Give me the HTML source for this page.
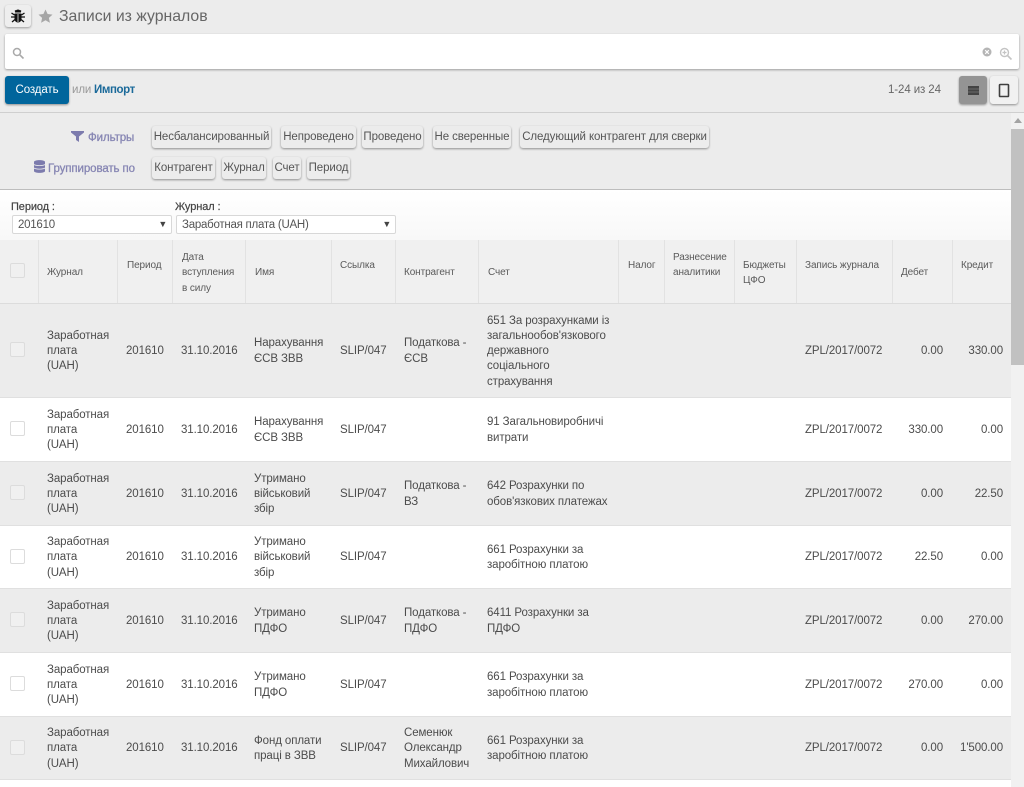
<!DOCTYPE html>
<html lang="ru"><head><meta charset="utf-8"><title>Записи из журналов</title>
<style>
html,body{margin:0;padding:0;width:1024px;height:787px;overflow:hidden;background:#fff;font-family:"Liberation Sans","DejaVu Sans",sans-serif;font-size:11.5px;letter-spacing:-.1px;color:#4c4c4c}
div,span,svg{position:absolute;box-sizing:border-box;white-space:nowrap}
table span,table div{position:static}
.btn{background:#ececec;border-radius:3px;box-shadow:0 1px 2px rgba(0,0,0,.4);height:22px;line-height:23px;text-align:center;font-size:11.5px;color:#555}
.lbl{color:#7c7bad;font-size:11.5px;opacity:.9;font-weight:normal;-webkit-text-stroke:.3px #7c7bad;line-height:15px}
.h{font-size:10px;color:#5a5a5a;line-height:15.3px}
.vl{width:1px;background:#e2e2e2;top:240px;height:63px}
.sel{top:215px;height:19px;background:#fff;border:1px solid #d8d8d8;border-radius:2px;line-height:19px;padding-left:5px;font-size:11.5px;letter-spacing:-.25px;color:#555}
.sel i{position:absolute;right:4px;top:-1px;font-style:normal;font-size:9px;color:#444}
.cb{display:inline-block;width:15px;height:15px;border:1px solid #dcdcdc;border-radius:2px;background:#f0f0f0;vertical-align:middle}
table .cb{position:relative;top:0}
table{position:absolute;left:0;top:304px;width:1011px;border-collapse:collapse;table-layout:fixed;font-size:11.5px;line-height:15.3px;color:#4c4c4c}
td{padding:3px 8px 0 9px;vertical-align:middle;border-bottom:1px solid #e0e0e0;overflow:hidden}
tr.g td{background:#ececec}
td.c{padding:0 0 0 10px}
td.r{text-align:right;padding-right:9px;padding-left:0}
td.r2{text-align:right;padding-right:8px;padding-left:0}
td.n{white-space:nowrap}
td.s{padding-right:4px}
</style></head>
<body>
<div style="left:0;top:0;width:1024px;height:113px;background:#ececec;border-bottom:1px solid #cfcfcf"></div>
<div style="left:5px;top:5px;width:26px;height:22px;background:#eee;border-radius:3px;box-shadow:0 1px 2px rgba(0,0,0,.35)"></div>
<svg style="left:10px;top:8px" width="16" height="16" viewBox="0 0 16 16"><path d="M5 4.500a3 3 0 0 1 6 0zM4.500 5.500h7V11a3.500 3.500 0 0 1-7 0z" fill="#111"/><path d="M5 2.500l1.500 1.500M11 2.500L9.500 4M1.500 5l3 2M14.500 5l-3 2M1 9h3.500M15 9h-3.500M2 14l3-2.500M14 14l-3-2.500" stroke="#111" stroke-width="1.300" fill="none"/><path d="M8 6v8" stroke="#ececec" stroke-width=".8"/></svg>
<svg style="left:38px;top:9px" width="15" height="14" viewBox="0 0 15 14"><path d="M7.500 .5l2.100 4.500 4.900.6-3.600 3.300 1 4.800-4.400-2.400-4.400 2.400 1-4.800L.5 5.600l4.900-.6z" fill="#a6a6a6"/></svg>
<div style="left:59px;top:8px;font-size:15.800px;letter-spacing:0;line-height:18px;color:#666">Записи из журналов</div>

<div style="left:5px;top:34px;width:1014px;height:35px;background:#fff;border-radius:2px;box-shadow:0 1px 2px rgba(0,0,0,.35)"></div>
<svg style="left:12px;top:47px" width="13" height="13" viewBox="0 0 13 13"><circle cx="5" cy="5" r="3.500" fill="none" stroke="#a9a9a9" stroke-width="1.500"/><path d="M7.800 7.800l3.700 3.700" stroke="#a9a9a9" stroke-width="1.600"/></svg>
<svg style="left:982px;top:47px" width="10" height="10" viewBox="0 0 10 10"><circle cx="5" cy="5" r="4.500" fill="#b5b5b5"/><path d="M3.200 3.200l3.600 3.600M6.800 3.200L3.200 6.800" stroke="#fff" stroke-width="1.100"/></svg>
<svg style="left:999px;top:47px" width="14" height="14" viewBox="0 0 14 14"><circle cx="5.500" cy="5.500" r="4" fill="none" stroke="#c4c4c4" stroke-width="1.400"/><path d="M8.500 8.500l4 4" stroke="#c4c4c4" stroke-width="1.600"/><path d="M3.500 5.500h4M5.500 3.500v4" stroke="#c4c4c4" stroke-width="1.200"/></svg>

<div style="left:5px;top:76px;width:64px;height:28px;background:#00659c;border-radius:3px;box-shadow:0 1px 2px rgba(0,0,0,.4);color:#fff;text-align:center;line-height:29px;font-size:11.5px;">Создать</div>
<div style="left:72px;top:83px;font-size:11.5px;line-height:15px;color:#999">или</div>
<div style="left:94px;top:83px;font-size:11.5px;line-height:15px;color:#1b6a9a;font-weight:bold;letter-spacing:-.4px">Импорт</div>
<div style="left:888px;top:83px;font-size:11.5px;line-height:15px;color:#666">1-24 из 24</div>
<div style="left:959px;top:76px;width:28px;height:28px;background:#949494;border-radius:3px;box-shadow:0 1px 2px rgba(0,0,0,.4)"></div>
<svg style="left:968px;top:86px" width="11" height="9" viewBox="0 0 11 9"><path d="M0 0h11v9H0z" fill="#444"/><path d="M0 3h11M0 6h11" stroke="#777" stroke-width=".7"/></svg>
<div style="left:990px;top:76px;width:28px;height:28px;background:#f1f1f1;border-radius:3px;box-shadow:0 1px 2px rgba(0,0,0,.4)"></div>
<svg style="left:998px;top:83px" width="12" height="15" viewBox="0 0 12 15"><rect x="1.500" y="1.500" width="9" height="12" rx=".8" fill="none" stroke="#3f3f3f" stroke-width="1.600"/></svg>

<div style="left:0;top:113px;width:1011px;height:77px;background:#ececec;border-bottom:1px solid #bdbdbd"></div>
<svg style="left:71px;top:131px" width="13" height="11" viewBox="0 0 13 11"><path d="M0 0h13v1.500L8 5.500V11L5 9V5.500L0 1.500z" fill="#7c7bad"/></svg>
<div class="lbl" style="left:88px;top:131px">Фильтры</div>
<svg style="left:34px;top:160px" width="11" height="13" viewBox="0 0 11 13"><path d="M0 2c0-2.500 11-2.500 11 0v9c0 2.500-11 2.500-11 0z" fill="#7c7bad"/><path d="M0 4.500c2 1.500 9 1.500 11 0M0 8c2 1.500 9 1.500 11 0" stroke="#ececec" stroke-width=".8" fill="none"/></svg>
<div class="lbl" style="left:48px;top:162px">Группировать по</div>
<div class="btn" style="left:152px;top:126px;width:119px">Несбалансированный</div>
<div class="btn" style="left:281px;top:126px;width:75px">Непроведено</div>
<div class="btn" style="left:362px;top:126px;width:61px">Проведено</div>
<div class="btn" style="left:433px;top:126px;width:78px">Не сверенные</div>
<div class="btn" style="left:520px;top:126px;width:189px">Следующий контрагент для сверки</div>
<div class="btn" style="left:152px;top:157px;width:63px">Контрагент</div>
<div class="btn" style="left:222px;top:157px;width:44px">Журнал</div>
<div class="btn" style="left:273px;top:157px;width:28px">Счет</div>
<div class="btn" style="left:307px;top:157px;width:43px">Период</div>

<div style="left:0;top:190px;width:1011px;height:50px;background:linear-gradient(#fff,#f8f8f8)"></div>
<div style="left:11px;top:200px;font-size:11px;line-height:14px;color:#444;-webkit-text-stroke:.2px #444">Период :</div>
<div style="left:175px;top:200px;font-size:11px;line-height:14px;color:#444;-webkit-text-stroke:.2px #444">Журнал :</div>
<div class="sel" style="left:12px;width:160px">201610<i>▼</i></div>
<div class="sel" style="left:176px;width:220px">Заработная плата (UAH)<i>▼</i></div>

<div style="left:0;top:240px;width:1011px;height:64px;background:#f0f0f0;border-bottom:1px solid #dcdcdc"></div>
<div class="vl" style="left:38px"></div><div class="vl" style="left:117px"></div><div class="vl" style="left:172px"></div><div class="vl" style="left:245px"></div><div class="vl" style="left:331px"></div><div class="vl" style="left:395px"></div><div class="vl" style="left:478px"></div><div class="vl" style="left:618px"></div><div class="vl" style="left:664px"></div><div class="vl" style="left:734px"></div><div class="vl" style="left:796px"></div><div class="vl" style="left:892px"></div><div class="vl" style="left:952px"></div>
<div class="cb" style="position:absolute;left:10px;top:263px"></div>
<div class="h" style="left:47px;top:265px">Журнал</div>
<div class="h" style="left:127px;top:258px">Период</div>
<div class="h" style="left:182px;top:250px">Дата<br>вступления<br>в силу</div>
<div class="h" style="left:255px;top:265px">Имя</div>
<div class="h" style="left:340px;top:258px">Ссылка</div>
<div class="h" style="left:404px;top:265px">Контрагент</div>
<div class="h" style="left:488px;top:265px">Счет</div>
<div class="h" style="left:628px;top:258px">Налог</div>
<div class="h" style="left:673px;top:250px">Разнесение<br>аналитики</div>
<div class="h" style="left:743px;top:258px">Бюджеты<br>ЦФО</div>
<div class="h" style="left:805px;top:258px">Запись журнала</div>
<div class="h" style="left:901px;top:265px">Дебет</div>
<div class="h" style="left:961px;top:258px">Кредит</div>

<table>
<colgroup><col style="width:38px"><col style="width:79px"><col style="width:55px"><col style="width:73px"><col style="width:86px"><col style="width:64px"><col style="width:83px"><col style="width:140px"><col style="width:46px"><col style="width:70px"><col style="width:62px"><col style="width:96px"><col style="width:60px"><col style="width:59px"></colgroup>
<tr class="g" style="height:93px"><td class="c"><span class="cb"></span></td><td>Заработная плата (UAH)</td><td class="n">201610</td><td class="n">31.10.2016</td><td>Нарахування ЄСВ ЗВВ</td><td class="n">SLIP/047</td><td>Податкова - ЄСВ</td><td class="s">651 За розрахунками із загальнообов'язкового державного соціального страхування</td><td></td><td></td><td></td><td class="n">ZPL/2017/0072</td><td class="r">0.00</td><td class="r2">330.00</td></tr>
<tr style="height:64px"><td class="c"><span class="cb" style="background:#fff"></span></td><td>Заработная плата (UAH)</td><td class="n">201610</td><td class="n">31.10.2016</td><td>Нарахування ЄСВ ЗВВ</td><td class="n">SLIP/047</td><td></td><td class="s">91 Загальновиробничі витрати</td><td></td><td></td><td></td><td class="n">ZPL/2017/0072</td><td class="r">330.00</td><td class="r2">0.00</td></tr>
<tr class="g" style="height:64px"><td class="c"><span class="cb"></span></td><td>Заработная плата (UAH)</td><td class="n">201610</td><td class="n">31.10.2016</td><td>Утримано військовий збір</td><td class="n">SLIP/047</td><td>Податкова - ВЗ</td><td class="s">642 Розрахунки по обов'язкових платежах</td><td></td><td></td><td></td><td class="n">ZPL/2017/0072</td><td class="r">0.00</td><td class="r2">22.50</td></tr>
<tr style="height:63px"><td class="c"><span class="cb" style="background:#fff"></span></td><td>Заработная плата (UAH)</td><td class="n">201610</td><td class="n">31.10.2016</td><td>Утримано військовий збір</td><td class="n">SLIP/047</td><td></td><td class="s">661 Розрахунки за заробітною платою</td><td></td><td></td><td></td><td class="n">ZPL/2017/0072</td><td class="r">22.50</td><td class="r2">0.00</td></tr>
<tr class="g" style="height:64px"><td class="c"><span class="cb"></span></td><td>Заработная плата (UAH)</td><td class="n">201610</td><td class="n">31.10.2016</td><td>Утримано ПДФО</td><td class="n">SLIP/047</td><td>Податкова - ПДФО</td><td class="s">6411 Розрахунки за ПДФО</td><td></td><td></td><td></td><td class="n">ZPL/2017/0072</td><td class="r">0.00</td><td class="r2">270.00</td></tr>
<tr style="height:64px"><td class="c"><span class="cb" style="background:#fff"></span></td><td>Заработная плата (UAH)</td><td class="n">201610</td><td class="n">31.10.2016</td><td>Утримано ПДФО</td><td class="n">SLIP/047</td><td></td><td class="s">661 Розрахунки за заробітною платою</td><td></td><td></td><td></td><td class="n">ZPL/2017/0072</td><td class="r">270.00</td><td class="r2">0.00</td></tr>
<tr class="g" style="height:63px"><td class="c"><span class="cb"></span></td><td>Заработная плата (UAH)</td><td class="n">201610</td><td class="n">31.10.2016</td><td>Фонд оплати праці в ЗВВ</td><td class="n">SLIP/047</td><td>Семенюк Олександр Михайлович</td><td class="s">661 Розрахунки за заробітною платою</td><td></td><td></td><td></td><td class="n">ZPL/2017/0072</td><td class="r">0.00</td><td class="r2">1'500.00</td></tr>
</table>

<div style="left:1011px;top:113px;width:13px;height:674px;background:#f1f1f1"></div>
<div style="left:1011px;top:129px;width:13px;height:236px;background:#c1c1c1"></div>
<svg style="left:1014px;top:118px" width="8" height="5" viewBox="0 0 8 5"><path d="M0 5L4 0l4 5z" fill="#a3a3a3"/></svg>
</body></html>
